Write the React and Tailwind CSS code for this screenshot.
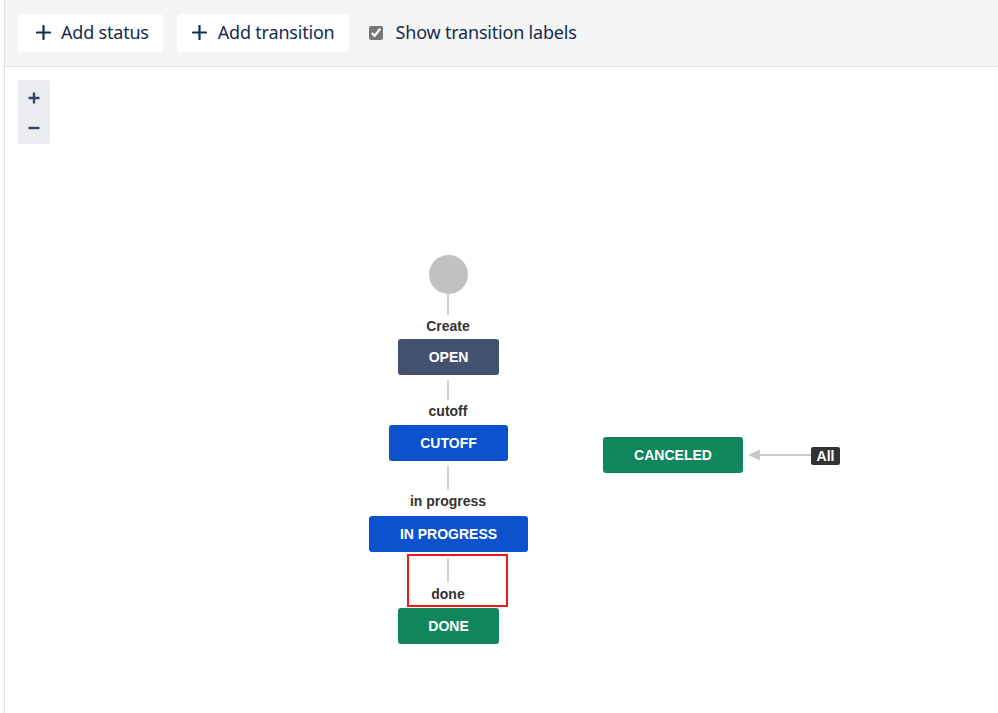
import React from "react";

function Plus() {
  return (
    <svg width="15" height="15" viewBox="0 0 15 15" className="shrink-0">
      <path d="M7.5 1v13M1 7.5h13" stroke="#172b4d" strokeWidth="2.2" strokeLinecap="round" />
    </svg>
  );
}

function VLine({ cls }) {
  return <div className={`absolute w-[2px] bg-[#d0d2d6] ${cls}`} />;
}

export default function App() {
  return (
    <div className="w-[998px] h-[713px] overflow-hidden bg-white pl-[4px]" style={{ fontFamily: '"Liberation Sans", Arial, sans-serif' }}>
      <div className="h-full border-l border-[#dfe1e6] flex flex-col">
        <div className="h-[67px] shrink-0 bg-[#f4f5f7] border-b border-[#dfe1e6] flex items-center pl-[13px] gap-[14px] pb-[1px]" style={{ fontFamily: '"Noto Sans", "Open Sans", sans-serif' }}>
          <button className="h-[38px] pl-[18px] pr-[14px] bg-white rounded-[4px] flex items-center gap-[10px] text-[18px] text-[#172b4d] tracking-[-0.2px]">
            <Plus />
            <span>Add status</span>
          </button>
          <button className="h-[38px] pl-[15px] pr-[14px] bg-white rounded-[4px] flex items-center gap-[11px] text-[18px] text-[#172b4d] tracking-[-0.2px]">
            <Plus />
            <span>Add transition</span>
          </button>
          <label className="flex items-center gap-[13px] text-[18px] text-[#172b4d] ml-[6px] tracking-[-0.2px]">
            <input type="checkbox" defaultChecked className="w-[14px] h-[14px] accent-[#767676]" />
            <span>Show transition labels</span>
          </label>
        </div>
        <div className="relative flex-1">
          <div className="absolute left-[13px] top-[13px] w-[32px] h-[64px] bg-[#ebecf0] rounded-[3px] flex flex-col items-center justify-center gap-[18px] pt-[2px]">
            <svg width="12" height="12" viewBox="0 0 12 12"><path d="M6 0.5v11M0.5 6h11" stroke="#344563" strokeWidth="2.4" /></svg>
            <svg width="12" height="12" viewBox="0 0 12 12"><path d="M0.5 6h11" stroke="#344563" strokeWidth="2.4" /></svg>
          </div>

          <div className="absolute left-[424px] top-[188px] w-[39px] h-[39px] rounded-full bg-[#c1c1c1]" />
          <VLine cls="left-[442px] top-[226px] h-[22px]" />
          <div className="absolute left-[343px] top-[251px] w-[200px] text-center text-[14px] leading-[16px] font-bold text-[#333]">Create</div>
          <div className="absolute left-[393px] top-[272px] w-[101px] h-[36px] rounded-[3px] bg-[#42526e] flex items-center justify-center text-white font-bold text-[14px]">OPEN</div>

          <VLine cls="left-[442px] top-[313px] h-[20px]" />
          <div className="absolute left-[343px] top-[336px] w-[200px] text-center text-[14px] leading-[16px] font-bold text-[#333]">cutoff</div>
          <div className="absolute left-[384px] top-[358px] w-[119px] h-[36px] rounded-[3px] bg-[#0b52cc] flex items-center justify-center text-white font-bold text-[14px]">CUTOFF</div>

          <VLine cls="left-[442px] top-[399px] h-[24px]" />
          <div className="absolute left-[343px] top-[426px] w-[200px] text-center text-[14px] leading-[16px] font-bold text-[#333]">in progress</div>
          <div className="absolute left-[364px] top-[449px] w-[159px] h-[36px] rounded-[3px] bg-[#0b52cc] flex items-center justify-center text-white font-bold text-[14px]">IN PROGRESS</div>

          <div className="absolute left-[402px] top-[487px] w-[101px] h-[53px] border-2 border-[#f01818]" />
          <VLine cls="left-[442px] top-[491px] h-[24px]" />
          <div className="absolute left-[343px] top-[519px] w-[200px] text-center text-[14px] leading-[16px] font-bold text-[#333]">done</div>
          <div className="absolute left-[393px] top-[541px] w-[101px] h-[36px] rounded-[3px] bg-[#10865a] flex items-center justify-center text-white font-bold text-[14px]">DONE</div>

          <div className="absolute left-[598px] top-[370px] w-[140px] h-[36px] rounded-[3px] bg-[#10865a] flex items-center justify-center text-white font-bold text-[14px]">CANCELED</div>
          <svg className="absolute left-[741px] top-[380px]" width="68" height="16" viewBox="0 0 68 16">
            <path d="M14 8H68" stroke="#c8c9cc" strokeWidth="2" />
            <path d="M2 8L14 2.5V13.5Z" fill="#c8c9cc" />
          </svg>
          <div className="absolute left-[806px] top-[380px] w-[29px] h-[18px] rounded-[2px] bg-[#333] flex items-center justify-center text-white font-bold text-[14px]">All</div>
        </div>
      </div>
    </div>
  );
}
